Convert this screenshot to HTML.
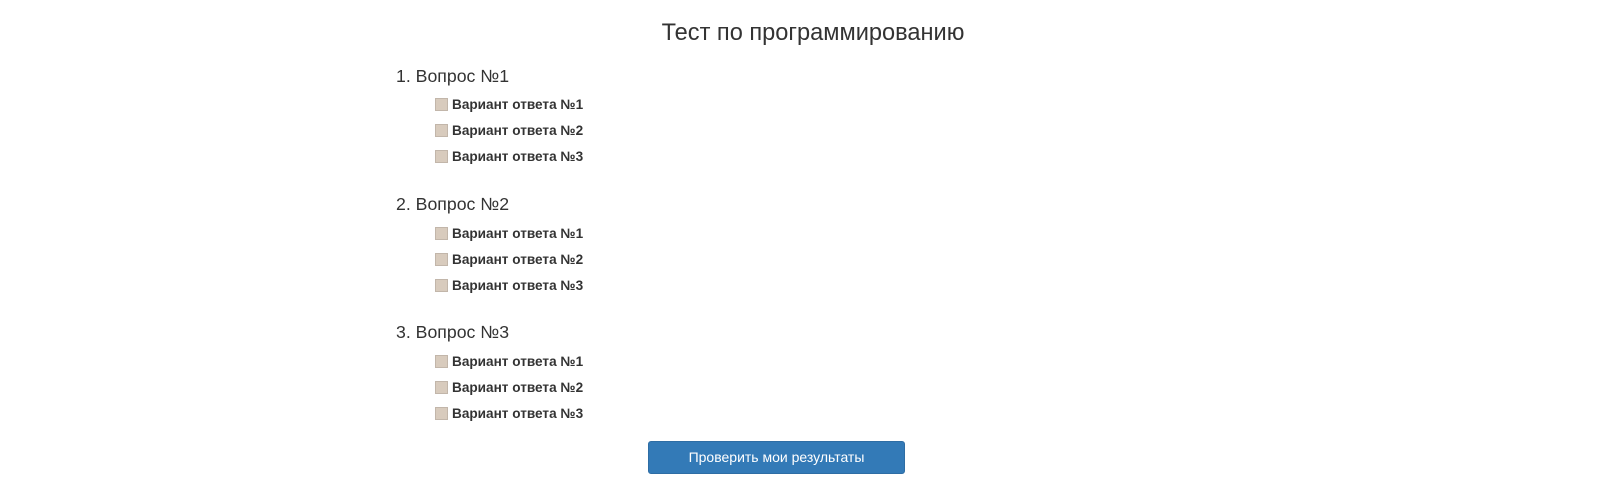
<!DOCTYPE html>
<html><head><meta charset="utf-8"><style>
body{margin:0;width:1598px;height:483px;background:#fff;font-family:"Liberation Sans",Arial,sans-serif;color:#333;position:relative;overflow:hidden}
.t{position:absolute;left:0;width:1626px;text-align:center;top:19px;font-size:23.6px;line-height:28px}
.q{position:absolute;left:396px;font-size:17.7px;line-height:20px}
.o{position:absolute;left:435px;font-size:13.6px;font-weight:bold;line-height:16px;height:16px}
.o i{position:absolute;left:0;top:1px;width:11px;height:11px;background:#d8cbbd;border:1px solid #c2b6aa}
.o span{position:absolute;left:17px;top:0;white-space:nowrap}
.b{position:absolute;left:648px;top:441px;width:255px;height:31px;background:#337ab7;border:1px solid #2e6da4;border-radius:3px;color:#fff;font-size:14px;text-align:center;line-height:31px}
</style></head><body>
<div class="t">Тест по программированию</div>
<div class="q" style="top:66px">1. Вопрос №1</div>
<div class="o" style="top:97px"><i></i><span>Вариант ответа №1</span></div>
<div class="o" style="top:123px"><i></i><span>Вариант ответа №2</span></div>
<div class="o" style="top:149px"><i></i><span>Вариант ответа №3</span></div>
<div class="q" style="top:194px">2. Вопрос №2</div>
<div class="o" style="top:226px"><i></i><span>Вариант ответа №1</span></div>
<div class="o" style="top:252px"><i></i><span>Вариант ответа №2</span></div>
<div class="o" style="top:278px"><i></i><span>Вариант ответа №3</span></div>
<div class="q" style="top:322px">3. Вопрос №3</div>
<div class="o" style="top:354px"><i></i><span>Вариант ответа №1</span></div>
<div class="o" style="top:380px"><i></i><span>Вариант ответа №2</span></div>
<div class="o" style="top:406px"><i></i><span>Вариант ответа №3</span></div>
<div class="b">Проверить мои результаты</div>
</body></html>
